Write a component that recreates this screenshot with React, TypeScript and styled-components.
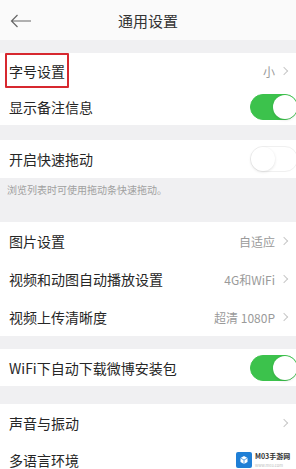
import React from 'react';
import styled, { createGlobalStyle } from 'styled-components';

const GlobalStyle = createGlobalStyle`
  html, body {
    margin: 0;
    padding: 0;
    background: #f0f0f2;
  }
  body {
    font-family: "Noto Sans CJK SC", "Noto Sans", sans-serif;
    -webkit-font-smoothing: antialiased;
  }
`;

type RowItem = {
  label: string;
  value?: string;
  arrow?: boolean;
  toggle?: 'on' | 'off';
  highlighted?: boolean;
};

const App: React.FC = () => {
  const renderRow = (item: RowItem, height: number) => (
    <Row key={item.label} $height={height}>
      <Label $highlighted={item.highlighted}>{item.label}</Label>
      <Right>
        {item.value && <Value>{item.value}</Value>}
        {item.arrow && <Chevron />}
        {item.toggle && <Toggle $on={item.toggle === 'on'} />}
      </Right>
    </Row>
  );

  return (
    <Screen>
      <GlobalStyle />
      <Header>
        <BackButton>
          <svg width="22" height="14" viewBox="0 0 22 14">
            <path d="M21 7H1.5M7.5 1L1.5 7l6 6" fill="none" stroke="#666" strokeWidth="1.2" />
          </svg>
        </BackButton>
        <Title>通用设置</Title>
      </Header>

      <Gap $height={13} />
      <Group>
        {renderRow({ label: '字号设置', value: '小', arrow: true, highlighted: true }, 36)}
        {renderRow({ label: '显示备注信息', toggle: 'on' }, 36)}
      </Group>

      <Gap $height={15} />
      <Group>{renderRow({ label: '开启快速拖动', toggle: 'off' }, 38)}</Group>
      <Hint>浏览列表时可使用拖动条快速拖动。</Hint>

      <Group>
        {renderRow({ label: '图片设置', value: '自适应', arrow: true }, 38)}
        {renderRow({ label: '视频和动图自动播放设置', value: '4G和WiFi', arrow: true }, 38)}
        {renderRow({ label: '视频上传清晰度', value: '超清 1080P', arrow: true }, 38)}
      </Group>

      <Gap $height={13} />
      <Group>{renderRow({ label: 'WiFi下自动下载微博安装包', toggle: 'on' }, 37)}</Group>

      <Gap $height={18} />
      <Group>
        {renderRow({ label: '声音与振动', arrow: true }, 37)}
        {renderRow({ label: '多语言环境' }, 37)}
      </Group>

      <Watermark>
        <WatermarkIcon>
          <svg width="10" height="10" viewBox="0 0 10 10">
            <path d="M5 1l3.5 2v4L5 9 1.5 7V3z" fill="#fff" />
            <path d="M5 5v4M5 5l3.5-2M5 5L1.5 3" stroke="#1f7fd6" strokeWidth="0.7" fill="none" />
          </svg>
        </WatermarkIcon>
        <WatermarkText>
          <WatermarkName>M03手游网</WatermarkName>
          <WatermarkUrl>www.m03.com</WatermarkUrl>
        </WatermarkText>
      </Watermark>
    </Screen>
  );
};

const Screen = styled.div`
  position: relative;
  width: 296px;
  height: 469px;
  overflow: hidden;
  background: #f0f0f2;
`;

const Header = styled.div`
  position: relative;
  height: 40px;
  display: flex;
  align-items: center;
  justify-content: center;
  background: #fafafa;
`;

const BackButton = styled.div`
  position: absolute;
  left: 10px;
  top: 14px;
  display: flex;
`;

const Title = styled.div`
  font-size: 15px;
  color: #333;
`;

const Gap = styled.div<{ $height: number }>`
  height: ${(p) => p.$height}px;
  background: #f0f0f2;
`;

const Group = styled.div`
  background: #fff;
`;

const Row = styled.div<{ $height: number }>`
  height: ${(p) => p.$height}px;
  display: flex;
  align-items: center;
  justify-content: space-between;
  padding-left: 9px;
`;

const Label = styled.span<{ $highlighted?: boolean }>`
  font-size: 14px;
  color: #262626;
  ${(p) =>
    p.$highlighted &&
    `
    align-self: stretch;
    display: flex;
    align-items: center;
    margin: 0 0 1px -4px;
    padding: 0 2px;
    border: 2px solid #d7282f;
    border-radius: 1px;
  `}
`;

const Right = styled.div`
  display: flex;
  align-items: center;
  gap: 6px;
  padding-right: 7px;
`;

const Value = styled.span`
  font-size: 12px;
  color: #9a9a9a;
`;

const Chevron = styled.span`
  width: 5px;
  height: 5px;
  margin-right: 2px;
  border-top: 1px solid #c8c8c8;
  border-right: 1px solid #c8c8c8;
  transform: rotate(45deg);
`;

const Toggle = styled.span<{ $on: boolean }>`
  position: relative;
  width: 48px;
  height: 26px;
  margin-right: -9px;
  border-radius: 13px;
  box-sizing: border-box;
  background: ${(p) => (p.$on ? '#3cc24c' : '#fff')};
  border: 1px solid ${(p) => (p.$on ? '#3cc24c' : '#f0f0f0')};

  &::after {
    content: '';
    position: absolute;
    top: 0;
    ${(p) => (p.$on ? 'right: 0;' : 'left: 0;')}
    width: 24px;
    height: 24px;
    border-radius: 50%;
    background: #fff;
    box-shadow: 0 1px 3px rgba(0, 0, 0, 0.12);
  }
`;

const Hint = styled.div`
  height: 44px;
  box-sizing: border-box;
  padding: 5px 7px 0;
  font-size: 10px;
  line-height: 14px;
  color: #a0a0a0;
`;

const Watermark = styled.div`
  position: absolute;
  left: 236px;
  top: 452px;
  display: flex;
  align-items: center;
  gap: 3px;
`;

const WatermarkIcon = styled.div`
  width: 16px;
  height: 16px;
  border-radius: 2px;
  background: #1f7fd6;
  display: flex;
  align-items: center;
  justify-content: center;
`;

const WatermarkText = styled.div`
  display: flex;
  flex-direction: column;
  gap: 1px;
`;

const WatermarkName = styled.span`
  font-size: 7px;
  line-height: 9px;
  color: #333;
  font-weight: bold;
  white-space: nowrap;
`;

const WatermarkUrl = styled.span`
  font-size: 4px;
  line-height: 6px;
  color: #bbb;
  white-space: nowrap;
`;

export default App;
